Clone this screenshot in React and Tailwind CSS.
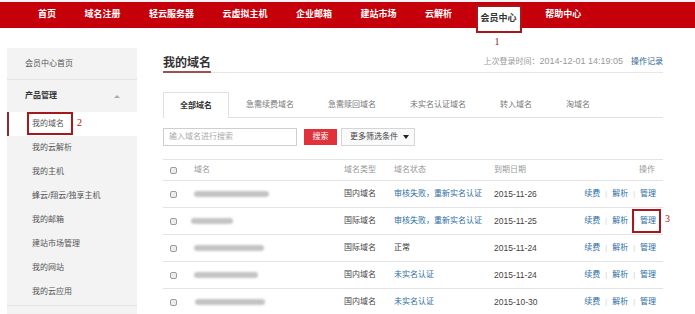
import React from "react";

const navItems = ["首页", "域名注册", "轻云服务器", "云虚拟主机", "企业邮箱", "建站市场", "云解析", "会员中心", "帮助中心"];
const sideItems = ["我的云解析", "我的主机", "蜂云/翔云/独享主机", "我的邮箱", "建站市场管理", "我的网站", "我的云应用"];
const tabs = ["全部域名", "急需续费域名", "急需赎回域名", "未实名认证域名", "转入域名", "淘域名"];
const rows = [
  { w: 75, off: 0, type: "国内域名", status: "审核失败，重新实名认证", link: true, date: "2015-11-26" },
  { w: 42, off: -3, type: "国际域名", status: "审核失败，重新实名认证", link: true, date: "2015-11-25", boxed: true },
  { w: 70, off: 0, type: "国际域名", status: "正常", link: false, date: "2015-11-24" },
  { w: 64, off: 0, type: "国内域名", status: "未实名认证", link: true, date: "2015-11-24" },
  { w: 70, off: 1, type: "国内域名", status: "未实名认证", link: true, date: "2015-10-30" },
];

export default function App() {
  return (
    <div className="w-[695px] h-[314px] overflow-hidden bg-white font-['Liberation_Sans','Noto_Sans_CJK_SC',sans-serif] text-[#333]">
      <div className="h-[2px] bg-[#f4f4f4]" />
      <div className="relative z-10 h-[26px] bg-[#c6000b] flex items-center pl-[38px] gap-[28.5px]">
        {navItems.map((n) =>
          n === "会员中心" ? (
            <div
              key={n}
              className="relative self-start mt-[3px] h-[28px] -mx-[5px] px-[3px] border-2 border-[#a8171b] bg-white text-[#333] text-[9px] font-bold flex items-center"
            >
              {n}
              <span className="absolute top-full mt-[3px] left-[17px] text-[10px] font-normal text-[#8b1a1a] font-['Liberation_Serif',serif]">1</span>
            </div>
          ) : (
            <span key={n} className="text-white text-[9px] font-bold whitespace-nowrap">
              {n}
            </span>
          )
        )}
      </div>

      <div className="flex pl-[7px]">
        {/* Sidebar */}
        <div className="mt-[20px] w-[130px] h-[300px] bg-[#f3f3f3] text-[8px] text-[#555]">
          <div className="h-[32px] flex items-center pl-[18px] border-b border-[#e3e3e3]">会员中心首页</div>
          <div className="h-[32px] flex items-center justify-between pl-[18px] pr-[17px] font-bold text-[#333]">
            <span>产品管理</span>
            <span className="w-0 h-0 border-l-[3px] border-r-[3px] border-b-[3px] border-l-transparent border-r-transparent border-b-[#aaa]" />
          </div>
          <div className="h-[24px] bg-white border-l-2 border-[#8c2a2a] flex items-center pl-[23px]">
            <span className="relative">
              我的域名
              <span className="absolute -left-[5px] -right-[9px] -top-[6px] -bottom-[5px] border-2 border-[#a8171b]" />
              <span className="absolute left-[45px] -top-[3px] text-[10px] text-[#a8171b] font-['Liberation_Serif',serif]">2</span>
            </span>
          </div>
          {sideItems.map((s) => (
            <div key={s} className="h-[24px] flex items-center pl-[25px]">
              {s}
            </div>
          ))}
          <div className="mt-[1px] border-b border-[#e3e3e3]" />
        </div>

        {/* Main */}
        <div className="ml-[26px] w-[500px]">
          <div className="mt-[24px] h-[21px] flex items-center justify-between border-b border-[#e6e6e6]">
            <span className="h-full flex items-center text-[12px] font-bold text-[#333] border-b-2 border-[#a05050] -mb-[2px] pt-[1px]">我的域名</span>
            <span className="text-[8px] text-[#999] flex items-center">
              上次登录时间：<span className="text-[9px] font-['Liberation_Sans',sans-serif]">2014-12-01 14:19:05</span>
              <span className="ml-[8px] text-[#2c5f93]">操作记录</span>
            </span>
          </div>

          <div className="mt-[19px] flex border-b border-[#e0e0e0] h-[26px]">
            {tabs.map((t, i) =>
              i === 0 ? (
                <div key={t} className="px-[16px] -mb-px h-[26px] flex items-center bg-white border border-b-0 border-[#e0e0e0] text-[8px] font-bold text-[#333]">
                  {t}
                </div>
              ) : (
                <div key={t} className="px-[17px] h-[26px] flex items-center text-[8px] text-[#777]">
                  {t}
                </div>
              )
            )}
          </div>

          <div className="mt-[10px] flex items-center h-[18px]">
            <div className="w-[134px] h-[18px] border border-[#cfcfcf] flex items-center pl-[5px] text-[8px] text-[#aaa]">输入域名进行搜索</div>
            <div className="ml-[7px] w-[33px] h-[16px] bg-[#e0323a] text-white text-[8px] flex items-center justify-center">搜索</div>
            <div className="ml-[4px] w-[74px] h-[18px] border border-[#d6d6d6] bg-[#fafafa] flex items-center pl-[8px] gap-[5px] text-[8px] text-[#444]">
              更多筛选条件
              <span className="w-0 h-0 border-l-[3.5px] border-r-[3.5px] border-t-[4px] border-l-transparent border-r-transparent border-t-[#222]" />
            </div>
          </div>

          <div className="mt-[13px] border-t border-[#e3e3e3]">
            <div className="grid grid-cols-[31px_150px_50px_100px_1fr_auto] items-center h-[21px] text-[8px] text-[#999] border-b border-[#e3e3e3]">
              <span className="pl-[7px]">
                <span className="block w-[7px] h-[7px] border border-[#9c9c9c] rounded-[2px] bg-[#ededed]" />
              </span>
              <span>域名</span>
              <span>域名类型</span>
              <span>域名状态</span>
              <span>到期日期</span>
              <span className="pr-[8px]">操作</span>
            </div>
            {rows.map((r, i) => (
              <div key={i} className="grid grid-cols-[31px_150px_50px_100px_1fr_auto] items-center h-[27px] text-[8px] border-b border-[#e3e3e3]">
                <span className="pl-[7px]">
                  <span className="block w-[7px] h-[7px] border border-[#9c9c9c] rounded-[2px] bg-[#ededed]" />
                </span>
                <span className="flex items-center">
                  <span
                    className="block h-[6px] rounded-full bg-[#c4c4c4] blur-[0.8px]"
                    style={{ width: r.w, marginLeft: r.off }}
                  />
                </span>
                <span className="text-[#444]">{r.type}</span>
                <span className={r.link ? "text-[#2f6ea5] whitespace-nowrap" : "text-[#333]"}>{r.status}</span>
                <span className="text-[8.5px] text-[#444] font-['Liberation_Sans',sans-serif]">{r.date}</span>
                <span className="pr-[7px] flex items-center text-[#2f6ea5]">
                  <span>续费</span>
                  <span className="mx-[5px] text-[#ccc] text-[7px]">|</span>
                  <span>解析</span>
                  <span className="mx-[5px] text-[#ccc] text-[7px]">|</span>
                  <span className="relative">
                    管理
                    {r.boxed && (
                      <>
                        <span className="absolute -left-[8px] -right-[5px] -top-[6px] -bottom-[6px] border-2 border-[#a8171b]" />
                        <span className="absolute left-[25px] -top-[4px] text-[10px] text-[#a8171b] font-['Liberation_Serif',serif]">3</span>
                      </>
                    )}
                  </span>
                </span>
              </div>
            ))}
          </div>
        </div>
      </div>
    </div>
  );
}
